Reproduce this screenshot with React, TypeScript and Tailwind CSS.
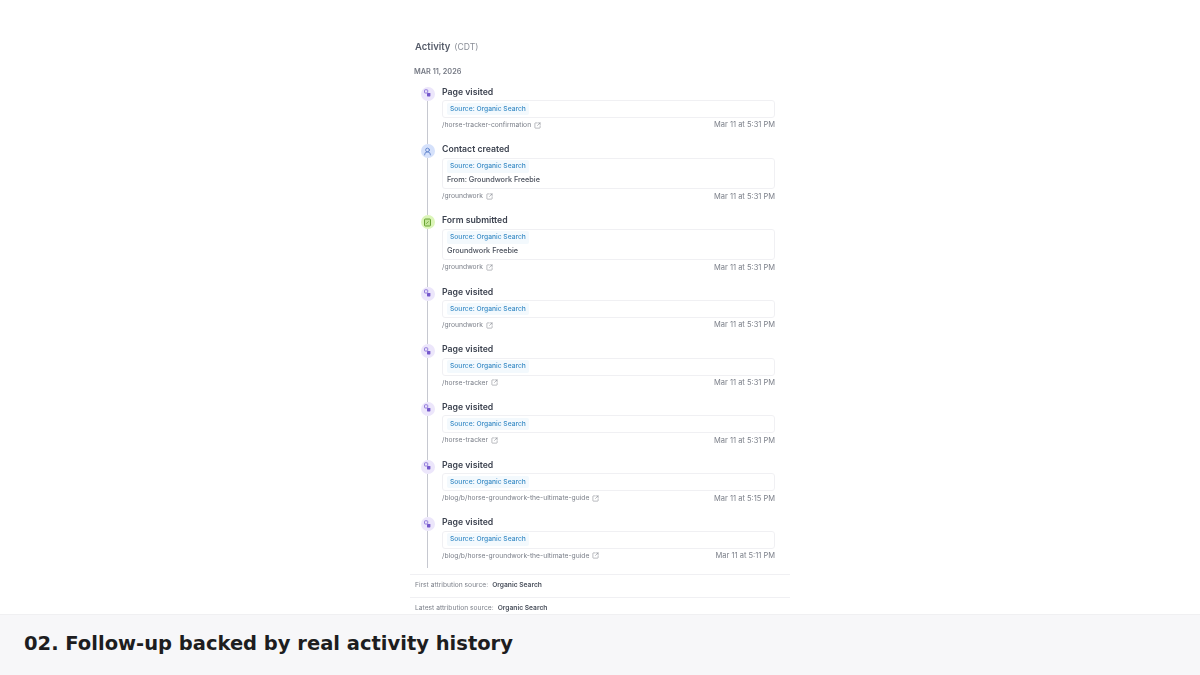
import { SquareArrowOutUpRight, UserRound } from 'lucide-react'

type Kind = 'page' | 'contact' | 'form'

type Item = {
  kind: Kind
  title: string
  detail?: string
  path: string
  time: string
}

const items: Item[] = [
  { kind: 'page', title: 'Page visited', path: '/horse-tracker-confirmation', time: 'Mar 11 at 5:31 PM' },
  { kind: 'contact', title: 'Contact created', detail: 'From: Groundwork Freebie', path: '/groundwork', time: 'Mar 11 at 5:31 PM' },
  { kind: 'form', title: 'Form submitted', detail: 'Groundwork Freebie', path: '/groundwork', time: 'Mar 11 at 5:31 PM' },
  { kind: 'page', title: 'Page visited', path: '/groundwork', time: 'Mar 11 at 5:31 PM' },
  { kind: 'page', title: 'Page visited', path: '/horse-tracker', time: 'Mar 11 at 5:31 PM' },
  { kind: 'page', title: 'Page visited', path: '/horse-tracker', time: 'Mar 11 at 5:31 PM' },
  { kind: 'page', title: 'Page visited', path: '/blog/b/horse-groundwork-the-ultimate-guide', time: 'Mar 11 at 5:15 PM' },
  { kind: 'page', title: 'Page visited', path: '/blog/b/horse-groundwork-the-ultimate-guide', time: 'Mar 11 at 5:11 PM' },
]

function KindIcon({ kind }: { kind: Kind }) {
  if (kind === 'contact') {
    return (
      <div className="flex h-[14px] w-[14px] shrink-0 items-center justify-center rounded-full bg-[#d5e1fb]">
        <UserRound size={9} strokeWidth={1.8} className="text-[#3f68bd]" />
      </div>
    )
  }
  if (kind === 'form') {
    return (
      <div className="flex h-[14px] w-[14px] shrink-0 items-center justify-center rounded-full bg-[#dcf5b9]">
        <svg width="9" height="9" viewBox="0 0 9 9" fill="none">
          <rect x="1.5" y="1" width="6" height="7" rx="0.8" fill="#c3e598" stroke="#5c9a26" strokeWidth="0.9" />
          <path d="M3.2 5.8l2.4-2.4" stroke="#5c9a26" strokeWidth="0.7" />
        </svg>
      </div>
    )
  }
  return (
    <div className="flex h-[14px] w-[14px] shrink-0 items-center justify-center rounded-full bg-[#ece6fb]">
      <svg width="9" height="9" viewBox="0 0 9 9" fill="none">
        <rect x="1.5" y="0.8" width="3.2" height="3.2" rx="0.6" stroke="#8a70d8" strokeWidth="0.9" />
        <rect x="4" y="4" width="3.4" height="3.4" rx="0.6" fill="#7558cc" />
      </svg>
    </div>
  )
}

function Row({ item, last }: { item: Item; last: boolean }) {
  return (
    <div className="flex">
      <div className="flex w-[15px] shrink-0 flex-col items-center pt-[2px]">
        <KindIcon kind={item.kind} />
        <div className={`w-[1.5px] flex-1 bg-[#c6c8d0] ${last ? 'mb-[5px]' : 'mb-[-2px]'}`} />
      </div>
      <div className="ml-[7px] flex-1 pb-[10.2px]">
        <div className="h-[14px] text-[8.7px] leading-[14px] font-semibold text-[#3d4350]">{item.title}</div>
        <div className="mt-[1.5px] rounded-[3px] border border-[#f0f0f3] bg-white pt-[1.5px] pb-[2px] pl-[4px]">
          <div className="flex">
            <span className="rounded-[2px] bg-[#f3f9fd] px-[3px] text-[6.7px] leading-[12.5px] font-medium text-[#3a8cc6]">
              Source: Organic Search
            </span>
          </div>
          {item.detail && (
            <div className="mt-[1px] h-[12.5px] text-[7.3px] leading-[12.5px] font-medium text-[#4a505c]">{item.detail}</div>
          )}
        </div>
        <div className="flex h-[14px] items-center justify-between text-[7.5px] text-[#7c808a]">
          <span className="flex items-center gap-[3px] text-[6.75px]">
            {item.path}
            <SquareArrowOutUpRight size={7} strokeWidth={1.6} className="text-[#6b707a]" />
          </span>
          <span>{item.time}</span>
        </div>
      </div>
    </div>
  )
}

export default function App() {
  return (
    <div className="flex h-[675px] w-[1200px] flex-col overflow-hidden bg-white">
      <div className="min-h-0 flex-1 overflow-hidden">
        <div className="mx-auto w-[380px] pt-[40.5px] font-['Inter',sans-serif] blur-[0.3px]">
          <div className="flex h-[14px] items-center gap-[4px] pl-[5px]">
            <span className="text-[9.5px] font-semibold text-[#565c6a]">Activity</span>
            <span className="text-[8.6px] text-[#8a8e97]">(CDT)</span>
          </div>
          <div className="mt-[10px] h-[14px] pl-[4px] text-[7.3px] leading-[14px] font-semibold text-[#767a85]">MAR 11, 2026</div>
          <div className="mt-[6px] pr-[15px] pl-[10px]">
            {items.map((item, i) => (
              <Row key={i} item={item} last={i === items.length - 1} />
            ))}
          </div>
          <div className="mt-[0.5px] flex h-[23px] items-center gap-[4px] border-t border-[#f0f0f3] pl-[5px] text-[6.7px]">
            <span className="text-[#7c808a]">First attribution source:</span>
            <span className="font-semibold text-[#4a505c]">Organic Search</span>
          </div>
          <div className="flex h-[23px] items-center gap-[4px] border-t border-[#f0f0f3] pl-[5px] text-[6.7px]">
            <span className="text-[#7c808a]">Latest attribution source:</span>
            <span className="font-semibold text-[#4a505c]">Organic Search</span>
          </div>
        </div>
      </div>
      <div className="flex h-[61px] shrink-0 items-center border-t border-[#f0f0f2] bg-[#f7f7f9] pb-[2px] pl-[24px] font-['DejaVu_Sans',sans-serif] text-[19.5px] font-bold text-[#1d1d20]">
        02. Follow-up backed by real activity history
      </div>
    </div>
  )
}
